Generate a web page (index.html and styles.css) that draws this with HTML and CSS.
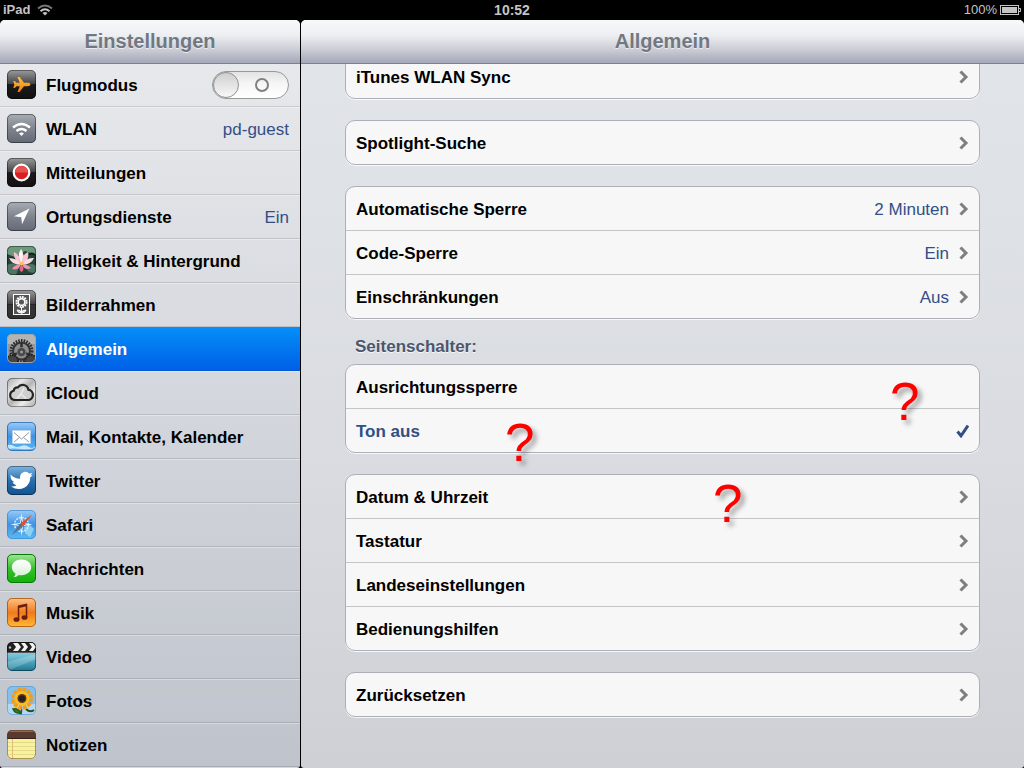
FILE: index.html
```html
<!DOCTYPE html>
<html lang="de">

<head>
    <meta charset="UTF-8">
    <meta name="viewport" content="width=device-width, initial-scale=1.0">
    <title>Einstellungen</title>
    <link rel="stylesheet" href="styles.css">
</head>

<body>
    <!-- shared shapes and gradients -->
    <svg class="defs" width="0" height="0" aria-hidden="true">
        <defs>
            <linearGradient id="black" x2="0" y2="1">
                <stop offset="0" stop-color="#9b9b9b" />
                <stop offset=".48" stop-color="#444" />
                <stop offset=".5" stop-color="#1c1c1c" />
                <stop offset="1" stop-color="#101010" />
            </linearGradient>
            <linearGradient id="grey" x2="0" y2="1">
                <stop offset="0" stop-color="#a9adb4" />
                <stop offset=".5" stop-color="#7f848e" />
                <stop offset="1" stop-color="#636976" />
            </linearGradient>
            <linearGradient id="silver" x2="1" y2="1">
                <stop offset="0" stop-color="#a9a9a9" />
                <stop offset=".3" stop-color="#e6e6e6" />
                <stop offset=".5" stop-color="#b4b4b4" />
                <stop offset=".7" stop-color="#ededed" />
                <stop offset="1" stop-color="#a6a6a6" />
            </linearGradient>
            <linearGradient id="sky" x2="0" y2="1">
                <stop offset="0" stop-color="#9ccdf7" />
                <stop offset=".5" stop-color="#3e92e4" />
                <stop offset="1" stop-color="#59bbf4" />
            </linearGradient>
            <linearGradient id="blue" x2="0" y2="1">
                <stop offset="0" stop-color="#7fb6e2" />
                <stop offset=".5" stop-color="#2a6fae" />
                <stop offset="1" stop-color="#11528f" />
            </linearGradient>
            <linearGradient id="green" x2="0" y2="1">
                <stop offset="0" stop-color="#a4e699" />
                <stop offset=".5" stop-color="#35c12a" />
                <stop offset="1" stop-color="#12b00b" />
            </linearGradient>
            <linearGradient id="orange" x2="0" y2="1">
                <stop offset="0" stop-color="#fbc587" />
                <stop offset=".5" stop-color="#f07a1c" />
                <stop offset="1" stop-color="#ffbc35" />
            </linearGradient>
            <linearGradient id="plane" x2="0" y2="1">
                <stop offset="0" stop-color="#ffc247" />
                <stop offset="1" stop-color="#f47a00" />
            </linearGradient>
            <linearGradient id="film" x2="0" y2="1">
                <stop offset="0" stop-color="#c9ecf2" />
                <stop offset=".5" stop-color="#6fbdd2" />
                <stop offset="1" stop-color="#1a7795" />
            </linearGradient>
            <linearGradient id="bubble" x2="0" y2="1">
                <stop offset="0" stop-color="#fff" />
                <stop offset="1" stop-color="#d8efd6" />
            </linearGradient>
            <clipPath id="tile"><rect width="29" height="29" rx="5" /></clipPath>
            <symbol id="chevron" viewBox="0 0 10 14">
                <path d="M1.5 1.5 7 7 1.5 12.5" fill="none" stroke="#7f7f7f" stroke-width="3" />
            </symbol>
            <symbol id="frame" viewBox="0 0 29 29">
                <rect x=".5" y=".5" width="28" height="28" rx="4.5" fill="none" stroke="#000" stroke-opacity=".4" />
            </symbol>
        </defs>
    </svg>

    <div class="statusbar">
        <div class="status-left">
            <span>iPad</span>
            <svg width="16" height="12" viewBox="0 0 16 12" fill="none" stroke="#c4c4c4" stroke-width="2">
                <path d="M1 4.5Q8-1.5 15 4.5" stroke="#777" />
                <path d="M3.5 7.2Q8 3.2 12.5 7.2" />
                <path d="M5.5 9 8 11.5 10.500 9Q8 7 5.500 9z" fill="#c4c4c4" stroke="none" />
            </svg>
        </div>
        <div class="status-time">10:52</div>
        <div class="status-right">
            <span>100%</span>
            <svg width="21" height="11" viewBox="0 0 21 11">
                <rect x=".5" y=".5" width="18" height="9" fill="none" stroke="#c4c4c4" />
                <rect x="2" y="2" width="15" height="6" fill="#c4c4c4" />
                <path d="M19 3.5h1.500v3H19" fill="none" stroke="#c4c4c4" />
            </svg>
        </div>
    </div>

    <div class="panes">
        <nav class="sidebar">
            <h1 class="title">Einstellungen</h1>
            <div class="menu">
                <div class="item">
                    <svg class="icon" viewBox="0 0 29 29">
                        <rect width="29" height="29" rx="5" fill="url(#black)" />
                        <path d="M23.500 14.500c0-1.200-1.500-1.700-3-1.700H17L12.500 7h-2l2.200 5.800H9.500L7.800 11H6.300l1 3.500-1 3.500h1.500l1.700-1.800h3.200L10.500 22h2l4.500-5.800h3.500c1.500 0 3-.5 3-1.700z" fill="url(#plane)" />
                        <use href="#frame" />
                    </svg>
                    <label class="label" for="flight">Flugmodus</label>
                    <input class="switch" type="checkbox" id="flight">
                </div>
                <a class="item" href="#">
                    <svg class="icon" viewBox="0 0 29 29">
                        <rect width="29" height="29" rx="5" fill="url(#grey)" />
                        <g fill="none" stroke="#fff" stroke-width="2.400">
                            <path d="M6 13.500Q14.500 6.500 23 13.500" />
                            <path d="M9.500 17Q14.500 12.800 19.500 17" />
                        </g>
                        <path d="M12 19.300q2.500-1.800 5 0L14.500 22z" fill="#fff" />
                        <use href="#frame" />
                    </svg>
                    <span class="label">WLAN</span>
                    <span class="value">pd-guest</span>
                </a>
                <a class="item" href="#">
                    <svg class="icon" viewBox="0 0 29 29">
                        <rect width="29" height="29" rx="5" fill="url(#black)" />
                        <circle cx="14.500" cy="14.500" r="7.800" fill="#d81f1f" stroke="#fff" stroke-width="2.200" />
                        <path d="M8 14.500a6.500 6.500 0 0 1 13 0z" fill="#e5524f" />
                        <use href="#frame" />
                    </svg>
                    <span class="label">Mitteilungen</span>
                </a>
                <a class="item" href="#">
                    <svg class="icon" viewBox="0 0 29 29">
                        <rect width="29" height="29" rx="5" fill="url(#grey)" />
                        <path d="M22.500 6.500 7 14.300l7.300.9.700 7z" fill="#fff" />
                        <use href="#frame" />
                    </svg>
                    <span class="label">Ortungsdienste</span>
                    <span class="value">Ein</span>
                </a>
                <a class="item" href="#">
                    <svg class="icon" viewBox="0 0 29 29">
                        <g clip-path="url(#tile)">
                            <rect width="29" height="29" fill="#26423a" />
                            <path d="M0 0h29v9L18 5 8 11 0 8z" fill="#6d9a7c" />
                            <path d="M0 19q7-4 12 2l-3 8H0zM18 20q7-4 11 0v6q-8 3-11-6z" fill="#4d7563" />
                            <path d="M2 13q4-2 6 1M21 9q4-3 7 0" stroke="#0f231e" stroke-width="2" fill="none" />
                            <g fill="#f6c3cf">
                                <path d="M14.500 18Q9 11 14 3q5 7 .5 15z" fill="#fff0f2" />
                                <path d="M14 18Q6 14 7 6q7 4 7 12zM15 18q-1-9 6-12 2 8-6 12z" />
                                <path d="M14 19Q5 19 2 12q9 0 12 7zM15 19q4-8 12-7-3 7-12 7z" fill="#fadbe2" />
                                <path d="M14 18Q7 19 5 23q7 2 9-5zM15 18q7 1 9 4-7 3-9-4z" fill="#ee93aa" />
                                <path d="M14.500 18q-4 6 0 8 4-2 0-8z" fill="#e56788" />
                            </g>
                            <circle cx="14.500" cy="17.500" r="1.800" fill="#f5c45a" />
                        </g>
                        <use href="#frame" />
                    </svg>
                    <span class="label">Helligkeit &amp; Hintergrund</span>
                </a>
                <a class="item" href="#">
                    <svg class="icon" viewBox="0 0 29 29">
                        <rect width="29" height="29" rx="5" fill="url(#black)" />
                        <path d="M0 14.500h29V24q0 5-5 5H5q-5 0-5-5z" fill="#333" />
                        <rect x="6.500" y="4.500" width="16" height="20" fill="#555" stroke="#fff" />
                        <circle cx="14.500" cy="12" r="5" fill="none" stroke="#fff" stroke-width="2" stroke-dasharray="1.800 .8" />
                        <circle cx="14.500" cy="12" r="3.300" fill="none" stroke="#fff" stroke-width="1.500" />
                        <path d="M14.500 17v6.500M14.500 23q-4 0-4.500-3 4-.5 4.500 3 .5-3.500 4.500-3-.5 3-4.500 3" fill="#ddd" stroke="#fff" />
                        <use href="#frame" />
                    </svg>
                    <span class="label">Bilderrahmen</span>
                </a>
                <a class="item active" href="#" aria-current="page">
                    <svg class="icon" viewBox="0 0 29 29">
                        <g clip-path="url(#tile)">
                            <rect width="29" height="29" fill="#989898" />
                            <rect width="29" height="10" fill="#b4b4b4" />
                            <circle cx="14.500" cy="17" r="10.500" fill="none" stroke="#2e2e2e" stroke-width="3" stroke-dasharray="1.600 1.100" />
                            <circle cx="14.500" cy="17" r="8.500" fill="#8f8f8f" stroke="#333" stroke-width="2" />
                            <path d="M14.500 17V9M14.500 17l8 4M14.500 17l-8 4" stroke="#2e2e2e" stroke-width="2.500" />
                            <circle cx="14.500" cy="18" r="4.500" fill="#474747" stroke="#888" />
                            <circle cx="14.500" cy="18" r="1.500" fill="#999" />
                            <circle cx="5" cy="27" r="6" fill="#444" stroke="#222" stroke-width="2" stroke-dasharray="1.500 1" />
                            <circle cx="24" cy="27" r="6" fill="#444" stroke="#222" stroke-width="2" stroke-dasharray="1.500 1" />
                        </g>
                        <rect x=".5" y=".5" width="28" height="28" rx="4.500" fill="none" stroke="#a5a5a5" />
                    </svg>
                    <span class="label">Allgemein</span>
                </a>
                <a class="item" href="#">
                    <svg class="icon" viewBox="0 0 29 29">
                        <rect width="29" height="29" rx="5" fill="url(#silver)" />
                        <path d="M7.500 22a4.800 4.800 0 0 1-.8-9.400 4 4 0 0 1 4.200-3.200 5.800 5.800 0 0 1 10.500 2.300A5.200 5.200 0 0 1 21.500 22z" fill="#cfcfcf" stroke="#242424" stroke-width="2.200" />
                        <path d="m14 16-4 4.500M14 16l5 4.500M14 16l3-6" stroke="#ececec" stroke-width="1.500" />
                        <use href="#frame" />
                    </svg>
                    <span class="label">iCloud</span>
                </a>
                <a class="item" href="#">
                    <svg class="icon" viewBox="0 0 29 29">
                        <g clip-path="url(#tile)">
                            <rect width="29" height="29" fill="url(#sky)" />
                            <path d="M0 23q4-1 7 1t7 0 8 1 7-2v3q-9 2-15 1T0 27z" fill="#e6f5fd" opacity=".8" />
                            <rect x="5.500" y="8.500" width="18" height="13" fill="#fff" stroke="#c7d6e4" stroke-width=".5" />
                            <path d="m7 10.500 7.500 6.500 7.500-6.500M7 20l5.500-4.500M22 20l-5.500-4.500" fill="none" stroke="#8d9aa8" />
                        </g>
                        <rect x=".5" y=".5" width="28" height="28" rx="4.500" fill="none" stroke="#1d5ca5" stroke-opacity=".7" />
                    </svg>
                    <span class="label">Mail, Kontakte, Kalender</span>
                </a>
                <a class="item" href="#">
                    <svg class="icon" viewBox="0 0 29 29">
                        <rect width="29" height="29" rx="5" fill="url(#blue)" />
                        <path d="M3.500 8.500q4.500 4.300 9.500 4.300Q12.500 7 17.500 5.800q3-.5 4.800 1.600l3.200-.4-1.800 2.300 2 .2-2.500 1.800q0 7-5.500 10.200Q11 25 4 20.500q3.500.2 5.500-1.300-3-.5-4-3h1.800Q4 14.500 3.800 12z" fill="#fff" />
                        <use href="#frame" />
                    </svg>
                    <span class="label">Twitter</span>
                </a>
                <a class="item" href="#">
                    <svg class="icon" viewBox="0 0 29 29">
                        <g clip-path="url(#tile)">
                            <rect width="29" height="29" fill="url(#sky)" />
                            <path d="m17 17 6-2 4 4-4 8-5-4z" fill="#a9e2f5" opacity=".7" />
                            <circle cx="14.500" cy="14.500" r="7" fill="none" stroke="#d6edfc" stroke-width="1.500" stroke-dasharray="2 1" />
                            <path d="m14.500 3 1.500 10 10 1.500L16 16l-1.500 10L13 16 3 14.500 13 13z" fill="#e8f6ff" />
                            <path d="m14.500 9 .8 4.700 4.700.8-4.700.8-.8 4.700-.8-4.700-4.700-.8 4.700-.8z" fill="#3d79b8" />
                            <path d="m25 4.500-9 12.300-3-3z" fill="#e45020" />
                            <path d="m4.500 25 8.500-11.200 3 3z" fill="#5d7187" />
                        </g>
                        <rect x=".5" y=".5" width="28" height="28" rx="4.500" fill="none" stroke="#3d86cd" stroke-opacity=".7" />
                    </svg>
                    <span class="label">Safari</span>
                </a>
                <a class="item" href="#">
                    <svg class="icon" viewBox="0 0 29 29">
                        <rect width="29" height="29" rx="5" fill="url(#green)" />
                        <path d="M14.500 5.500c-5.500 0-9.700 3.300-9.700 7.800 0 2.600 1.400 4.800 3.600 6.200 0 1.800-1 2.900-2 3.600 2.300.1 4.200-.9 5.300-2.200 7 1.200 12.500-2.400 12.500-7.600 0-4.500-4.200-7.800-9.700-7.800z" fill="url(#bubble)" />
                        <rect x=".5" y=".5" width="28" height="28" rx="4.500" fill="none" stroke="#087808" />
                    </svg>
                    <span class="label">Nachrichten</span>
                </a>
                <a class="item" href="#">
                    <svg class="icon" viewBox="0 0 29 29">
                        <rect width="29" height="29" rx="5" fill="url(#orange)" />
                        <path d="m11 7.500 9-2v2.800l-9 2z" fill="#6e1c0d" />
                        <path d="M11.500 8v13M19.500 6v13.500" stroke="#6e1c0d" stroke-width="1.500" />
                        <ellipse cx="9.500" cy="21.500" rx="3" ry="2.300" fill="#6e1c0d" />
                        <ellipse cx="17.500" cy="19.500" rx="3" ry="2.300" fill="#6e1c0d" />
                        <rect x=".5" y=".5" width="28" height="28" rx="4.500" fill="none" stroke="#a84f0c" stroke-opacity=".8" />
                    </svg>
                    <span class="label">Musik</span>
                </a>
                <a class="item" href="#">
                    <svg class="icon" viewBox="0 0 29 29">
                        <g clip-path="url(#tile)">
                            <rect width="29" height="29" fill="url(#film)" />
                            <path d="M0 29V20L29 12v5z" fill="#fff" opacity=".2" />
                            <rect width="29" height="10.500" fill="#202020" />
                            <path d="M6 1h5l3 4-3 4H6l3-4zM14 1h4l3 4-3 4h-4l3-4zM22 1h4l3 4-3 4h-4l3-4z" fill="#f2f2f2" />
                            <path d="M0 10.500h29" stroke="#555" />
                            <circle cx="3" cy="5.500" r="1.200" fill="#bbb" />
                        </g>
                        <use href="#frame" />
                    </svg>
                    <span class="label">Video</span>
                </a>
                <a class="item" href="#">
                    <svg class="icon" viewBox="0 0 29 29">
                        <g clip-path="url(#tile)">
                            <rect width="29" height="29" fill="#86bfec" />
                            <path d="M0 18h29v11H0z" fill="#b3d8f2" />
                            <path d="M14 18q1 5 0 11M14 27q-3-5-8-4 2 5 8 4" fill="#3c7a26" stroke="#2d5a1c" stroke-width="1.500" />
                            <path d="M19 23q4 4 8 1" fill="none" stroke="#2d4a1c" stroke-width="2" />
                            <circle cx="15" cy="12.500" r="8" fill="none" stroke="#f49d12" stroke-width="6" stroke-dasharray="3.200 1" />
                            <circle cx="15" cy="12.500" r="7.500" fill="#fbbc22" />
                            <circle cx="15" cy="12.500" r="4.500" fill="#5c351c" />
                            <circle cx="15" cy="12.500" r="3" fill="#24201f" />
                        </g>
                        <rect x=".5" y=".5" width="28" height="28" rx="4.500" fill="none" stroke="#5b9bd0" stroke-opacity=".7" />
                    </svg>
                    <span class="label">Fotos</span>
                </a>
                <a class="item" href="#">
                    <svg class="icon" viewBox="0 0 29 29">
                        <g clip-path="url(#tile)">
                            <rect width="29" height="29" fill="#f8f29c" />
                            <path d="M0 12.500h29M0 16.500h29M0 20.500h29M0 24.500h29" stroke="#e4db8a" />
                            <path d="M5.500 9v20" stroke="#e4bd7c" />
                            <rect width="29" height="8.500" fill="#5a3a30" />
                            <path d="M0 8.500h29" stroke="#39221b" />
                            <path d="M0 1h29" stroke="#8b6b5f" stroke-width="2" />
                        </g>
                        <rect x=".5" y=".5" width="28" height="28" rx="4.500" fill="none" stroke="#5a3a10" stroke-opacity=".5" />
                    </svg>
                    <span class="label">Notizen</span>
                </a>
            </div>
        </nav>

        <main class="detail">
            <h2 class="title">Allgemein</h2>
            <div class="settings">
                <div class="group">
                    <a class="row" href="#"><span class="label">iTunes WLAN Sync</span><svg class="chevron"><use href="#chevron" /></svg></a>
                </div>
                <div class="group">
                    <a class="row" href="#"><span class="label">Spotlight-Suche</span><svg class="chevron"><use href="#chevron" /></svg></a>
                </div>
                <div class="group">
                    <a class="row" href="#"><span class="label">Automatische Sperre</span><span class="value">2 Minuten</span><svg class="chevron"><use href="#chevron" /></svg></a>
                    <a class="row" href="#"><span class="label">Code-Sperre</span><span class="value">Ein</span><svg class="chevron"><use href="#chevron" /></svg></a>
                    <a class="row" href="#"><span class="label">Einschränkungen</span><span class="value">Aus</span><svg class="chevron"><use href="#chevron" /></svg></a>
                </div>
                <h3 class="group-title">Seitenschalter:</h3>
                <div class="group">
                    <label class="row">
                        <input class="choice" type="radio" name="side-switch">
                        <span class="label">Ausrichtungssperre</span>
                        <svg class="check" viewBox="0 0 14 14"><path d="M2.500 7.500 6 11.800 13 1.500" /></svg>
                    </label>
                    <label class="row">
                        <input class="choice" type="radio" name="side-switch" checked>
                        <span class="label">Ton aus</span>
                        <svg class="check" viewBox="0 0 14 14"><path d="M2.500 7.500 6 11.800 13 1.500" /></svg>
                    </label>
                </div>
                <div class="group">
                    <a class="row" href="#"><span class="label">Datum &amp; Uhrzeit</span><svg class="chevron"><use href="#chevron" /></svg></a>
                    <a class="row" href="#"><span class="label">Tastatur</span><svg class="chevron"><use href="#chevron" /></svg></a>
                    <a class="row" href="#"><span class="label">Landeseinstellungen</span><svg class="chevron"><use href="#chevron" /></svg></a>
                    <a class="row" href="#"><span class="label">Bedienungshilfen</span><svg class="chevron"><use href="#chevron" /></svg></a>
                </div>
                <div class="group">
                    <a class="row" href="#"><span class="label">Zurücksetzen</span><svg class="chevron"><use href="#chevron" /></svg></a>
                </div>
            </div>
        </main>
    </div>

    <!-- notes on top of the screen -->
    <span class="mark mark-1">?</span>
    <span class="mark mark-2">?</span>
    <span class="mark mark-3">?</span>
</body>

</html>
```

FILE: styles.css
```css
*,
*::before,
*::after {
    box-sizing: border-box;
}

body {
    margin: 0;
    height: 100vh;
    display: flex;
    flex-direction: column;
    position: relative;
    overflow: hidden;
    background: #000;
    color: #000;
    font-family: "Liberation Sans", Arial, sans-serif;
    font-size: 17px;
    line-height: 20px;
}

a {
    color: inherit;
    text-decoration: none;
}

.defs {
    position: absolute;
}

/* status bar */
.statusbar {
    flex: none;
    display: grid;
    grid-template-columns: 1fr auto 1fr;
    align-items: center;
    height: 20px;
    padding: 0 3px;
    color: #c4c4c4;
    font-size: 13px;
    font-weight: bold;
}

.status-left,
.status-right {
    display: flex;
    align-items: center;
    gap: 7px;
}

.status-right {
    justify-content: flex-end;
    gap: 3px;
    font-weight: normal;
}

.status-time {
    font-size: 14px;
}

/* panes */
.panes {
    flex: 1;
    display: flex;
    gap: 1px;
    min-height: 0;
}

.sidebar,
.detail {
    border-radius: 5px 5px 3px 3px;
    overflow: hidden;
}

.sidebar {
    flex: none;
    width: 300px;
    background: linear-gradient(#e9ebee, #bfc3cb);
}

.detail {
    flex: 1;
    background: linear-gradient(#e2e6ea, #d9dbe1 60%, #cfd0d5);
}

.title {
    position: relative;
    z-index: 1;
    height: 44px;
    margin: 0;
    border-bottom: 1px solid #7c8092;
    background: linear-gradient(#f7f8f9, #eeeff2 35%, #cfd1d9 65%, #a4a8b8);
    color: #717882;
    font-size: 20px;
    line-height: 43px;
    text-align: center;
    text-shadow: 0 1px 0 rgba(255, 255, 255, .6);
}

.label,
.value {
    padding-top: 2px;
}

.label {
    flex: 1;
    font-weight: bold;
}

.value {
    color: #324f85;
}

/* left menu */
.menu {
    margin-top: -1px;
}

.item {
    display: flex;
    align-items: center;
    gap: 10px;
    height: 44px;
    padding: 0 11px 0 7px;
    border-bottom: 1px solid rgba(0, 0, 0, .12);
    box-shadow: 0 1px 0 rgba(255, 255, 255, .35);
}

.item.active {
    border-bottom-color: #0057d8;
    background: linear-gradient(#058ff7, #0060e8);
    color: #fff;
}

.icon {
    flex: none;
    width: 29px;
    height: 29px;
}

.switch {
    appearance: none;
    display: flex;
    align-items: center;
    width: 77px;
    height: 28px;
    margin: 0;
    border: 1px solid #989898;
    border-radius: 14px;
    background: linear-gradient(#e2e2e2, #f6f6f6 45%, #fff);
}

.switch::before {
    content: "";
    width: 26px;
    height: 26px;
    border: 1px solid #919191;
    border-radius: 50%;
    background: linear-gradient(#cfcfcf, #f8f8f8);
}

.switch::after {
    content: "";
    width: 14px;
    height: 14px;
    margin-left: 16px;
    border: 2px solid #808080;
    border-radius: 50%;
}

.switch:checked {
    flex-direction: row-reverse;
    background: #f58220;
}

/* right side */
.settings {
    margin-top: -10px;
    padding: 0 44px;
}

.group {
    margin-bottom: 21px;
    border: 1px solid #acafb5;
    border-radius: 10px;
    background: #f7f7f7;
    box-shadow: 0 1px 0 rgba(255, 255, 255, .8);
}

.group-title {
    height: 24px;
    margin: 0;
    padding-left: 10px;
    color: #4c566c;
    font-size: 17px;
    line-height: 14px;
    text-shadow: 0 1px 0 rgba(255, 255, 255, .8);
}

.row {
    display: flex;
    align-items: center;
    height: 44px;
    padding: 0 10px;
    border-bottom: 1px solid #c5c5c8;
}

.row:last-child {
    height: 43px;
    border-bottom: none;
}

.chevron {
    width: 10px;
    height: 14px;
    margin-left: 10px;
}

.choice {
    appearance: none;
    margin: 0;
}

.choice:checked + .label {
    color: #324f85;
}

.check {
    visibility: hidden;
    width: 14px;
    height: 14px;
    fill: none;
    stroke: #324f85;
    stroke-width: 3px;
}

.choice:checked ~ .check {
    visibility: visible;
}

/* red question marks */
.mark {
    position: absolute;
    color: #f00;
    font-size: 53px;
    line-height: 53px;
    text-shadow: 4px 4px 5px rgba(0, 0, 0, .35);
    pointer-events: none;
}

.mark-1 {
    top: 375px;
    left: 890px;
}

.mark-2 {
    top: 416px;
    left: 505px;
}

.mark-3 {
    top: 477px;
    left: 713px;
}
```
